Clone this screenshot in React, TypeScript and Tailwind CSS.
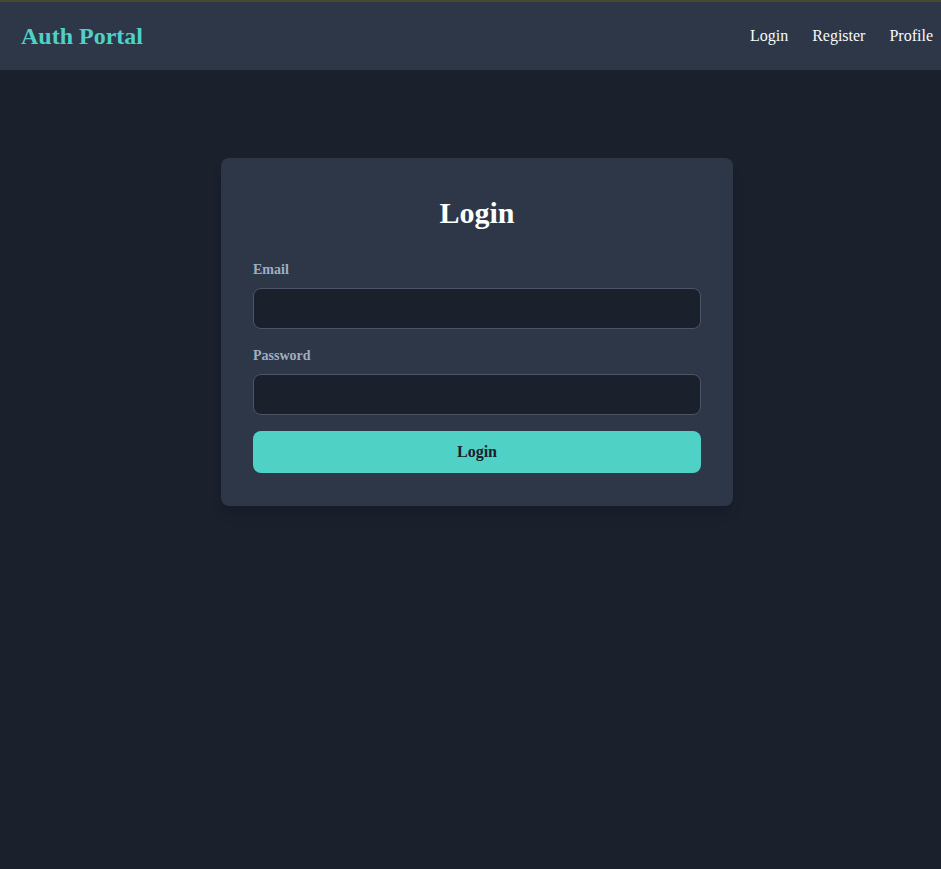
export default function App() {
  return (
    <div className="min-h-[869px] bg-[#1a202c] font-['Liberation_Serif','Times_New_Roman',serif]">
      <div className="h-[2px] bg-[#4b4a2e]" />
      <header className="flex h-[68px] items-center justify-between bg-[#2d3748] pl-[21px] pr-[8px]">
        <h1 className="text-[24px] font-bold text-[#4fd1c5]">Auth Portal</h1>
        <nav className="flex items-center gap-[24px] text-[16px] text-[#f7fafc]">
          <a href="#">Login</a>
          <a href="#">Register</a>
          <a href="#">Profile</a>
        </nav>
      </header>
      <main className="flex justify-center pl-[13px] pt-[88px]">
        <div className="w-[512px] rounded-[8px] bg-[#2d3748] px-[32px] pt-[37px] pb-[33px] shadow-lg">
          <h2 className="text-center text-[30px] font-bold leading-[36px] text-white">Login</h2>
          <form className="mt-[29px]" onSubmit={(e) => e.preventDefault()}>
            <label className="block text-[14px] font-bold leading-[20px] text-[#a0aec0]">Email</label>
            <input
              type="email"
              className="mt-[8px] block h-[41px] w-full rounded-[8px] border border-[#4a5568] bg-[#1a202c] px-3 text-white outline-none"
            />
            <label className="mt-[17px] block text-[14px] font-bold leading-[20px] text-[#a0aec0]">Password</label>
            <input
              type="password"
              className="mt-[8px] block h-[41px] w-full rounded-[8px] border border-[#4a5568] bg-[#1a202c] px-3 text-white outline-none"
            />
            <button
              type="submit"
              className="mt-[16px] block h-[42px] w-full rounded-[8px] bg-[#4fd1c5] text-[16px] font-bold text-[#1a202c]"
            >
              Login
            </button>
          </form>
        </div>
      </main>
    </div>
  );
}
